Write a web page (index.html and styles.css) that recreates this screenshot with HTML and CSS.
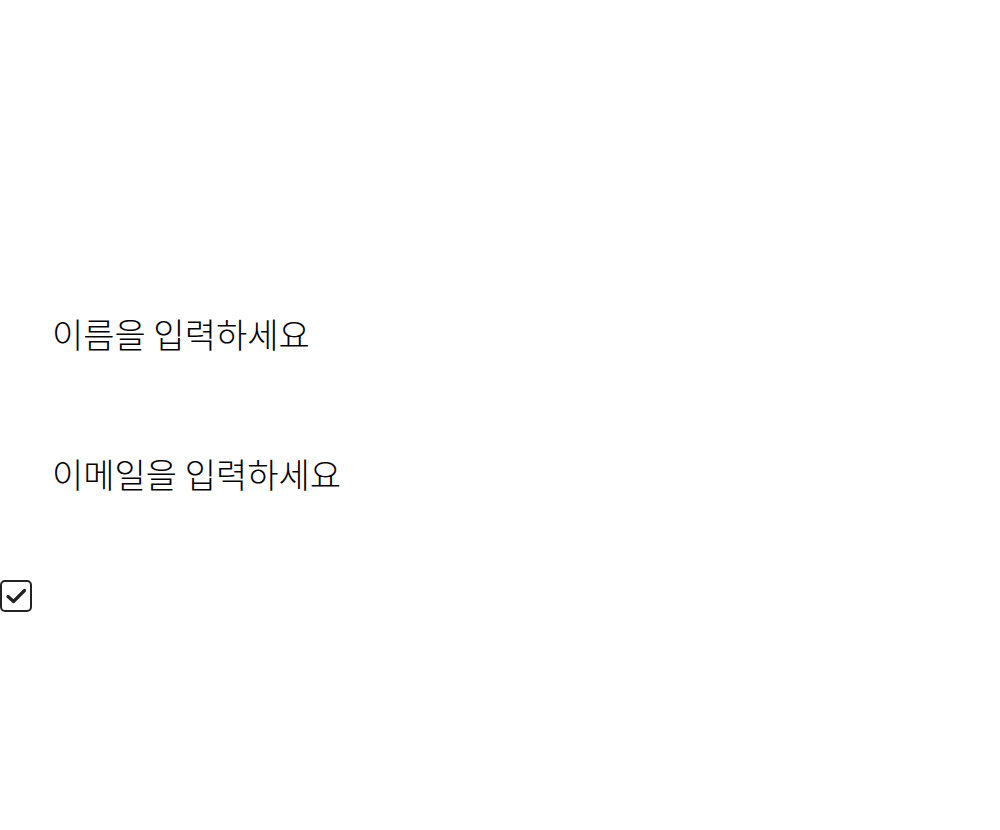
FILE: index.html
```html
<!DOCTYPE html>
<html>
	<head>
		<meta charset="utf-8" />
		<link rel="stylesheet" href="styles.css">
	</head>
	<body>
		<form class="signup">
			<div class="field">
				<input type="text" placeholder="이름을 입력하세요" />
			</div>
			<div class="field">
				<input type="email" placeholder="이메일을 입력하세요" />
			</div>
			<label class="agree">
				<span class="box">
					<svg viewBox="0 0 32 32" width="32" height="32">
						<rect x="1" y="1" width="30" height="30" rx="4" fill="none" stroke="#222" stroke-width="2" />
						<path d="M8 16.5 L13.5 21.5 L24.5 10.5" fill="none" stroke="#222" stroke-width="3.2" stroke-linecap="round" stroke-linejoin="round" />
					</svg>
				</span>
			</label>
		</form>
	</body>
</html>
```

FILE: styles.css
```css
body {
	margin: 0;
	background: #fff;
	font-family: "Noto Sans CJK KR", "Noto Sans", sans-serif;
}

.signup {
	display: flex;
	flex-direction: column;
	padding-top: 298px;
}

.field {
	height: 140px;
}

.field input {
	box-sizing: border-box;
	width: 100%;
	height: 70px;
	padding: 0 52px;
	border: none;
	outline: none;
	background: transparent;

	font-family: inherit;
	font-size: 34px;
	font-weight: 300;
	color: #000;
}

.field input::placeholder {
	color: #000;
	opacity: 1;
}

.agree {
	display: block;
	height: 32px;
	margin-top: 2px;
}

.agree .box {
	display: block;
	width: 32px;
	height: 32px;
}

.agree svg {
	display: block;
}
```
